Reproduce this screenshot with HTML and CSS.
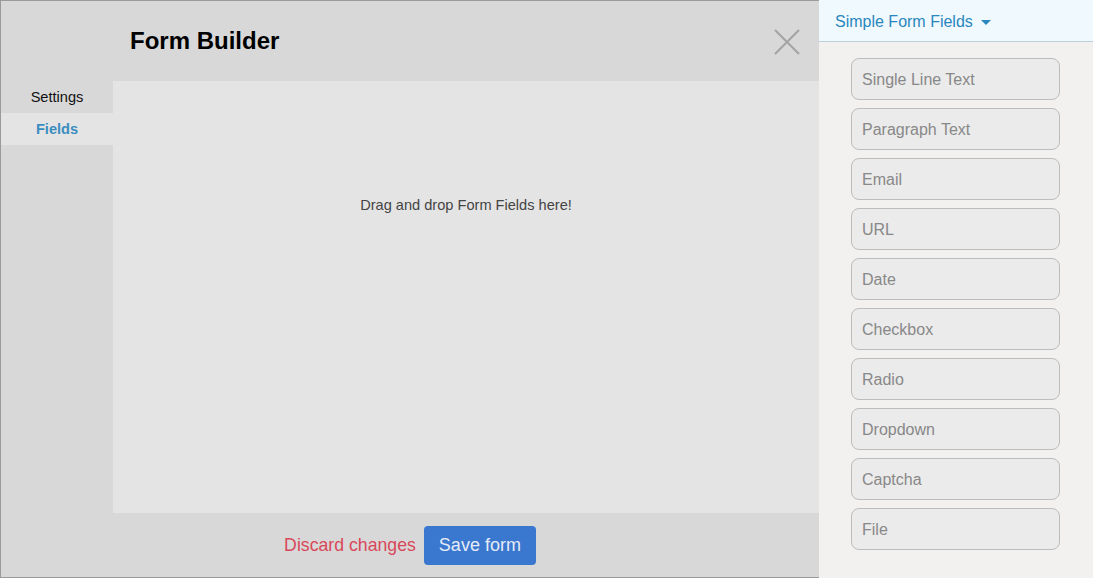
FILE: index.html
```html
<!DOCTYPE html>
<html>
<head>
<meta charset="utf-8">
<link rel="stylesheet" href="styles.css">
</head>
<body>
<div class="page">
  <div class="modal">
    <div class="modal-header">
      <h1 class="title">Form Builder</h1>
      <button class="close" aria-label="Close">
        <svg width="26" height="26" viewBox="0 0 26 26"><path d="M1 1L25 25M25 1L1 25" stroke="#a3a3a3" stroke-width="2" fill="none"/></svg>
      </button>
    </div>
    <div class="modal-body">
      <nav class="nav">
        <div class="nav-item">Settings</div>
        <div class="nav-item active">Fields</div>
      </nav>
      <div class="dropzone">Drag and drop Form Fields here!</div>
    </div>
    <div class="modal-footer">
      <a class="discard">Discard changes</a>
      <button class="save">Save form</button>
    </div>
  </div>
  <aside class="panel">
    <div class="panel-header">Simple Form Fields <span class="caret"></span></div>
    <div class="field-list">
      <div class="field">Single Line Text</div>
      <div class="field">Paragraph Text</div>
      <div class="field">Email</div>
      <div class="field">URL</div>
      <div class="field">Date</div>
      <div class="field">Checkbox</div>
      <div class="field">Radio</div>
      <div class="field">Dropdown</div>
      <div class="field">Captcha</div>
      <div class="field">File</div>
    </div>
  </aside>
</div>
</body>
</html>
```

FILE: styles.css
```css
* { box-sizing: border-box; }
html, body { margin: 0; padding: 0; }
body {
  font-family: "Liberation Sans", Arial, sans-serif;
  width: 1093px;
  height: 578px;
  overflow: hidden;
  background: #f2f1f0;
}
.page {
  display: flex;
  width: 1093px;
  height: 578px;
}
.modal {
  width: 819px;
  height: 578px;
  border: 1px solid #9a9a9a;
  border-right: none;
  background: #d8d8d8;
  display: flex;
  flex-direction: column;
}
.modal-header {
  height: 80px;
  flex: none;
  display: flex;
  align-items: center;
  justify-content: space-between;
  padding: 0 19px 0 129px;
}
.title {
  margin: 0;
  font-size: 24px;
  font-weight: bold;
  color: #000;
}
.close {
  background: none;
  border: none;
  padding: 0;
  width: 26px;
  height: 26px;
  display: flex;
  margin-top: 1px;
}
.modal-body {
  flex: 1;
  display: flex;
}
.nav {
  width: 112px;
  flex: none;
  display: flex;
  flex-direction: column;
}
.nav-item {
  height: 32px;
  display: flex;
  align-items: center;
  justify-content: center;
  font-size: 14.6px;
  color: #111;
}
.nav-item.active {
  background: #e5e4e4;
  color: #3b8dc0;
  font-weight: bold;
}
.dropzone {
  flex: 1;
  background: #e5e4e4;
  text-align: center;
  padding-top: 116px;
  font-size: 14.6px;
  color: #444;
}
.modal-footer {
  height: 64px;
  flex: none;
  display: flex;
  align-items: center;
  justify-content: center;
  gap: 8px;
}
.discard {
  font-size: 17.7px;
  color: #d9485a;
  cursor: pointer;
}
.save {
  font-family: inherit;
  font-size: 18px;
  height: 39px;
  padding: 0 15px;
  border: none;
  border-radius: 4px;
  background: #3a77cf;
  color: #e4ebf6;
}
.panel {
  flex: 1;
  background: #f2f1f0;
  display: flex;
  flex-direction: column;
}
.panel-header {
  height: 42px;
  flex: none;
  background: #f0f9fe;
  border-bottom: 1px solid #bcd0da;
  display: flex;
  align-items: center;
  padding: 2px 0 0 16px;
  font-size: 16px;
  color: #2a87bd;
}
.caret {
  display: inline-block;
  width: 0;
  height: 0;
  border-left: 5px solid transparent;
  border-right: 5px solid transparent;
  border-top: 5px solid #2a87bd;
  margin-left: 8px;
  margin-top: 1px;
}
.field-list {
  display: flex;
  flex-direction: column;
  gap: 8px;
  padding: 16px 0 0 32px;
}
.field {
  width: 209px;
  height: 42px;
  border: 1px solid #bcbcbc;
  border-radius: 8px;
  background: #ebebeb;
  display: flex;
  align-items: center;
  padding: 2px 0 0 10px;
  font-size: 16px;
  color: #888;
}
```
